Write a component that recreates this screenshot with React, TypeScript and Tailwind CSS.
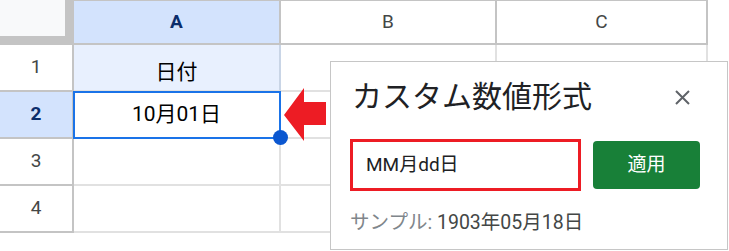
import React from 'react'

// セル一覧（行番号と A 列の値）
const rows = [
  { n: '1', a: '日付' },
  { n: '2', a: '10月01日' },
  { n: '3', a: '' },
  { n: '4', a: '' },
]

function CloseIcon() {
  return (
    <svg width="15" height="15" viewBox="0 0 15 15" fill="none" stroke="#5f6368" strokeWidth="2">
      <path d="M1 1 L14 14 M14 1 L1 14" />
    </svg>
  )
}

export default function App() {
  return (
    <div className="relative w-[729px] h-[251px] overflow-hidden bg-white font-[Roboto,'Noto_Sans_CJK_JP',sans-serif]">
      {/* 列見出し */}
      <div className="flex h-[45px]">
        <div className="w-[74px] h-full bg-[#c4c4c4]">
          <div className="w-[65px] h-[36px] bg-[#f8f9fa]" />
        </div>
        <div className="w-[207px] h-full border-t border-r-2 border-b-2 border-[#c4c4c4] bg-[#d3e3fd] flex items-center justify-center text-[19px] font-bold text-[#0b2d6b]">
          A
        </div>
        <div className="w-[216px] h-full border-t border-r-2 border-b-2 border-[#c4c4c4] flex items-center justify-center text-[19px] text-[#444746]">
          B
        </div>
        <div className="w-[211px] h-full border-t border-r-2 border-b-2 border-[#c4c4c4] flex items-center justify-center text-[19px] text-[#444746]">
          C
        </div>
        <div className="flex-1" />
      </div>

      {/* 行 */}
      {rows.map((r) => {
        const selected = r.n === '2'
        const first = r.n === '1'
        return (
          <div key={r.n} className="flex h-[47px]">
            <div
              className={`w-[74px] h-full border-r-2 border-b-2 border-[#c4c4c4] flex items-center justify-center text-[19px] ${
                selected ? 'bg-[#d3e3fd] font-bold text-[#0b2d6b]' : 'text-[#444746]'
              }`}
            >
              {r.n}
            </div>
            <div
              className={`w-[207px] h-full border-r-2 border-b-2 flex justify-center text-[21px] text-black ${
                first ? 'bg-[#e8f0fe] border-r-[#c9d5e6] border-b-[#e1e1e1] items-end pb-[2px]' : 'border-[#e1e1e1] items-center'
              }`}
            >
              {r.a}
            </div>
            <div className="w-[216px] h-full border-r-2 border-b-2 border-[#e1e1e1]" />
            <div className="w-[211px] h-full border-r-2 border-b-2 border-[#e1e1e1]" />
          </div>
        )
      })}

      {/* 選択セルの枠とフィルハンドル */}
      <div className="absolute left-[73px] top-[91px] w-[208px] h-[48px] border-2 border-[#1a73e8]" />
      <div className="absolute left-[273px] top-[130px] w-[15px] h-[15px] rounded-full bg-[#0b57d0]" />

      {/* 赤い矢印 */}
      <svg className="absolute left-[284px] top-[88px]" width="44" height="54" viewBox="0 0 44 54">
        <polygon points="0,27 20,0 20,14 42,14 42,37 20,37 20,53" fill="#ed1c24" />
      </svg>

      {/* カスタム数値形式ダイアログ */}
      <div className="absolute left-[330px] top-[61px] w-[398px] h-[189px] border border-[#c6c6c6] bg-white pl-[19px]">
        <div className="flex items-center justify-between h-[70px] pl-[2px] pr-[37px]">
          <span className="text-[30px] leading-none text-[#202124]">カスタム数値形式</span>
          <CloseIcon />
        </div>
        <div className="flex items-center gap-[12px] mt-[7px]">
          <div className="w-[231px] h-[52px] border-[3px] border-[#ed1c24] flex items-center pl-[13px] text-[19px] text-[#202124]">
            MM月dd日
          </div>
          <button className="w-[107px] h-[48px] rounded-[4px] bg-[#188038] text-white text-[19px]">
            適用
          </button>
        </div>
        <div className="mt-[19px] text-[19.5px] leading-[26px]">
          <span className="text-[#80868b]">サンプル: </span>
          <span className="text-[#444746]">1903年05月18日</span>
        </div>
      </div>
    </div>
  )
}
